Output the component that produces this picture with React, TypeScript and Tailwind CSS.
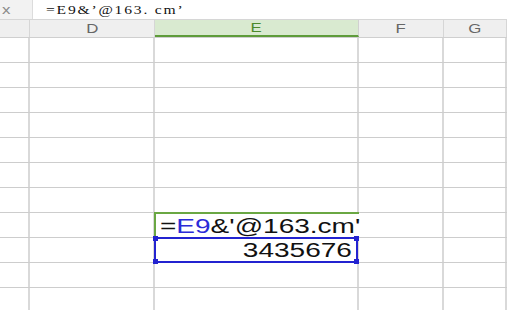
const COLS = [
  { key: 'row', w: 'w-[30px]', label: '' },
  { key: 'D', w: 'w-[125px]', label: 'D' },
  { key: 'E', w: 'w-[204px]', label: 'E' },
  { key: 'F', w: 'w-[85px]', label: 'F' },
  { key: 'G', w: 'flex-1', label: 'G' },
];

const ROWS = Array.from({ length: 11 });

export default function App() {
  return (
    <div className="relative h-[310px] w-[507px] overflow-hidden bg-white font-['Liberation_Sans',Arial,sans-serif]">
      {/* ── Formula bar ── */}
      <div className="flex h-[20px] border-b border-[#d6d6d6]">
        <div className="flex w-[32px] items-center bg-[#f2f2f2] pl-[2px] text-[13px] text-[#8a8a8a]">
          <span className="inline-block origin-left scale-x-[1.3]">x</span>
        </div>
        <div className="flex flex-1 items-center border-l border-[#dcdcdc] bg-white pl-[13px]">
          <span className="inline-block origin-left scale-x-[1.2] font-['Liberation_Serif',serif] text-[13px] tracking-[1.5px] text-[#111]">
            =E9&amp;’@163. cm’
          </span>
        </div>
      </div>

      {/* ── Column headers ── */}
      <div className="flex h-[18px] border-b border-[#cfcfcf] bg-[#efefef]">
        {COLS.map((c) => (
          <div
            key={c.key}
            className={
              c.key === 'E'
                ? `${c.w} flex items-center justify-center border-b-2 border-r border-b-[#5e9c3a] border-r-[#d0d0d0] bg-[#d9ead0] text-[12px] text-[#4c8a2c]`
                : `${c.w} flex items-center justify-center border-r border-[#d6d6d6] text-[12px] text-[#666]`
            }
          >
            <span className="inline-block scale-x-[1.4]">{c.label}</span>
          </div>
        ))}
      </div>

      {/* ── Grid ── */}
      {ROWS.map((_, r) => (
        <div key={r} className="flex h-[25px] border-b border-[#cdcdcd]">
          {COLS.map((c) => (
            <div
              key={c.key}
              className={`${c.w} relative border-r-2 border-[#d9d9d9]`}
            >
              {c.key === 'E' && r === 7 && (
                <div className="absolute -left-[1px] -top-[1px] z-10 flex h-[26px] w-[205px] items-center border-l-2 border-t-2 border-[#6aa743] bg-white pl-[4px] text-[20px] text-[#111]">
                  <span className="inline-block origin-left scale-x-[1.4] whitespace-nowrap">
                    =<span className="text-[#2b2bd8]">E9</span>&amp;'@163.cm'
                  </span>
                </div>
              )}
              {c.key === 'E' && r === 8 && (
                <div className="absolute -left-[1px] -top-[1px] z-10 flex h-[26px] w-[204px] items-center justify-end border-2 border-[#2323d0] bg-white pr-[4px] text-[20px] text-[#111]">
                  <span className="inline-block origin-right scale-x-[1.4]">3435676</span>
                  <span className="absolute -left-[3px] -top-[3px] h-[5px] w-[5px] bg-[#2323d0]" />
                  <span className="absolute -right-[3px] -top-[3px] h-[5px] w-[5px] bg-[#2323d0]" />
                  <span className="absolute -bottom-[3px] -left-[3px] h-[5px] w-[5px] bg-[#2323d0]" />
                  <span className="absolute -bottom-[3px] -right-[3px] h-[5px] w-[5px] bg-[#2323d0]" />
                </div>
              )}
            </div>
          ))}
        </div>
      ))}
    </div>
  );
}
